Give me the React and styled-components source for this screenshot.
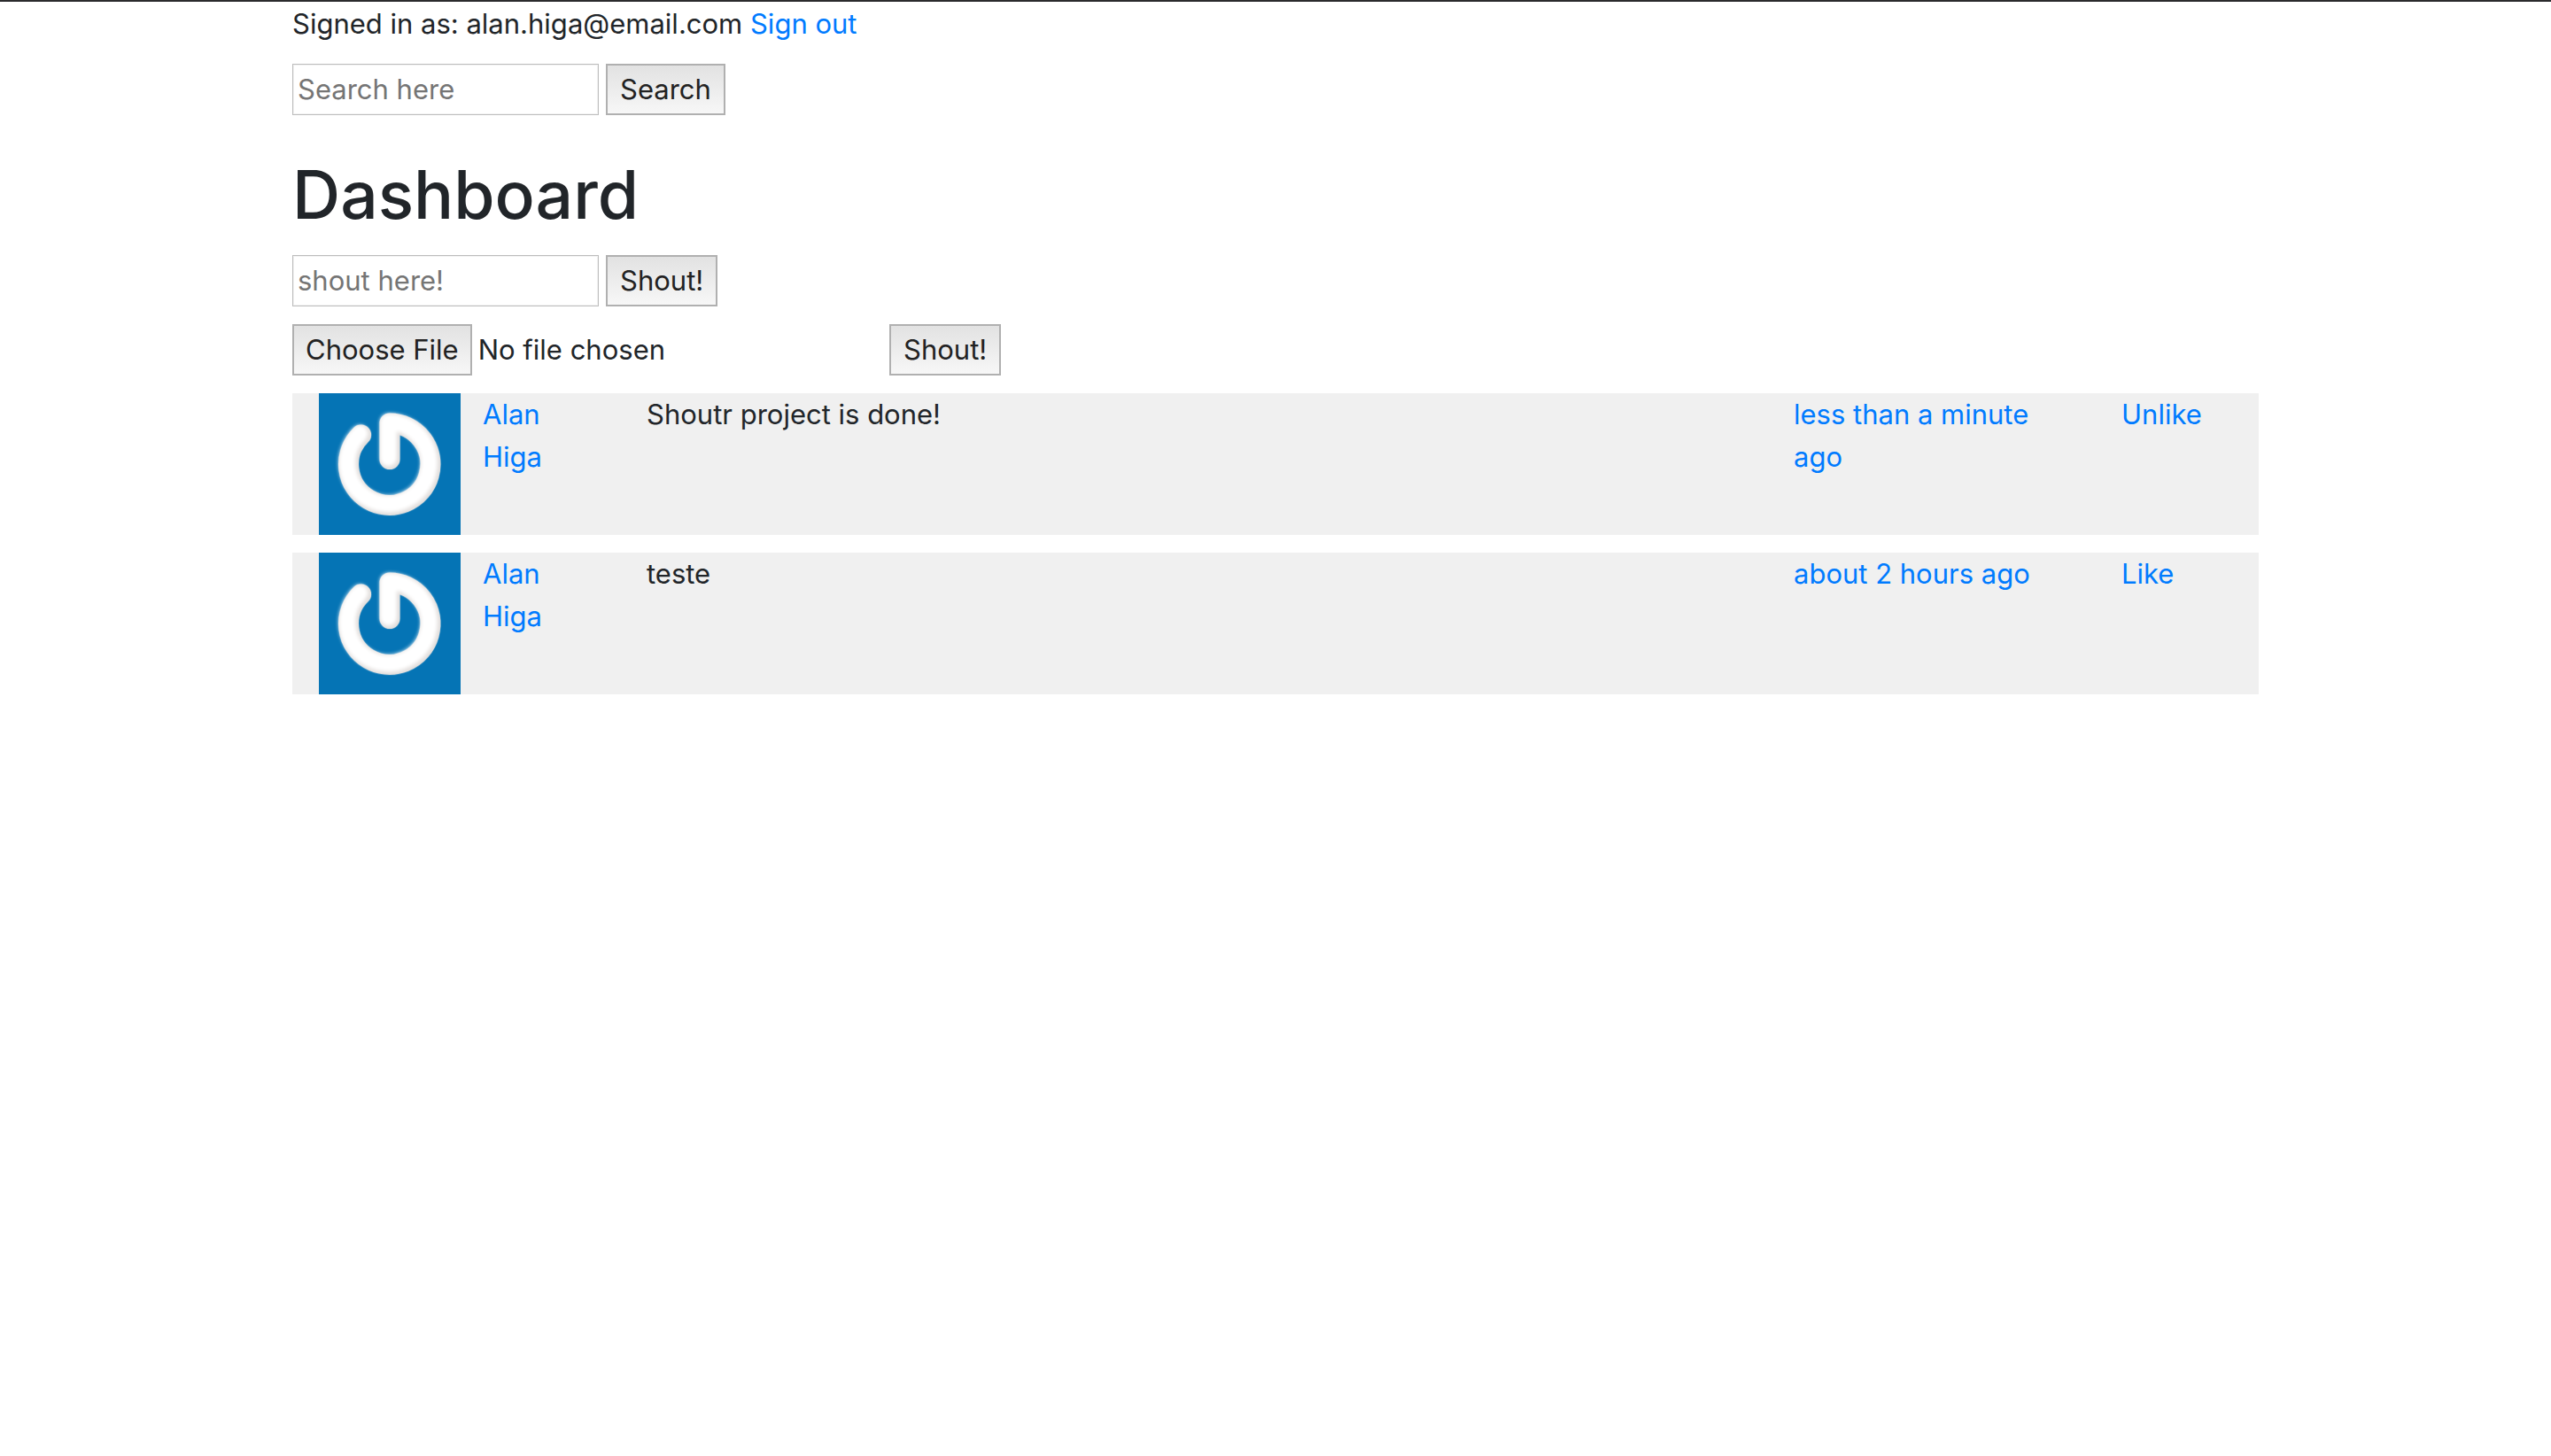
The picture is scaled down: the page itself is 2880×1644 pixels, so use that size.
import React from "react";
import styled, { createGlobalStyle } from "styled-components";

const GlobalStyle = createGlobalStyle`
  *, *::before, *::after { box-sizing: border-box; }
  body {
    margin: 0;
    background: #fff;
    color: #212529;
    font-family: Inter, "Liberation Sans", sans-serif;
    font-size: 31px;
    line-height: 48px;
  }
`;

const Page = styled.div`
  border-top: 2px solid #2b2b2d;
`;

const Container = styled.main`
  max-width: 2280px;
  margin: 0 auto;
  padding: 0 30px 20px;
  display: flex;
  flex-direction: column;
  gap: 20px;
`;

const Link = styled.a`
  color: #007bff;
  text-decoration: none;
  &:hover { text-decoration: underline; }
`;

const Header = styled.header`
  padding: 1px 0;
`;

const Title = styled.h1`
  margin: 20px 0 0;
  padding-top: 2px;
  font-size: 75px;
  font-weight: 500;
  line-height: 96px;
`;

const Form = styled.form`
  display: flex;
  align-items: center;
  gap: 8px;
`;

const TextInput = styled.input`
  width: 346px;
  height: 58px;
  padding: 0 5px 2px;
  border: 1px solid #bdbdbd;
  box-shadow: inset 0 0 0 1px #f2f2f2;
  background: #fff;
  color: inherit;
  font: inherit;
  &::placeholder { color: #757575; opacity: 1; }
`;

const Button = styled.button`
  height: 58px;
  padding: 0 14px;
  border: 2px solid #b0b0b0;
  border-radius: 0;
  background: linear-gradient(#e2e2e2, #f7f7f7);
  color: #222;
  font: inherit;
`;

const FileInput = styled.input`
  width: 666px;
  height: 58px;
  color: inherit;
  font: inherit;
  &::file-selector-button {
    height: 58px;
    margin: 0 7px 0 0;
    padding: 0 13px;
    border: 2px solid #b0b0b0;
    border-radius: 0;
    background: linear-gradient(#e2e2e2, #f7f7f7);
    color: #222;
    font: inherit;
  }
`;

const ShoutList = styled.div`
  display: flex;
  flex-direction: column;
  gap: 20px;
`;

const Shout = styled.article`
  display: grid;
  grid-template-columns: repeat(12, minmax(0, 1fr));
  background: #f0f0f0;
`;

const Cell = styled.div`
  grid-column: span ${(p) => p.$span};
  padding: 0 30px;
`;

const AvatarImage = styled.svg`
  display: block;
  width: 160px;
  height: 160px;
`;

const Highlight = styled.path`
  filter: blur(2px);
`;

const MARK = "M80 74.5V34A46.2 46.2 0 1 1 47.6 47";

function Avatar() {
  return (
    <AvatarImage viewBox="0 0 160 160" role="img" aria-label="Avatar">
      <rect width="160" height="160" fill="#0574b5" />
      <g fill="none" strokeLinecap="round" strokeLinejoin="round">
        <path d={MARK} stroke="#5ba3d0" strokeWidth="24.4" opacity="0.5" />
        <path d={MARK} stroke="#e2dedc" strokeWidth="23" />
        <Highlight d={MARK} stroke="#fff" strokeWidth="19" transform="translate(-1.5 -1.5)" />
      </g>
    </AvatarImage>
  );
}

const shouts = [
  { id: 1, author: "Alan Higa", body: "Shoutr project is done!", time: "less than a minute ago", action: "Unlike" },
  { id: 2, author: "Alan Higa", body: "teste", time: "about 2 hours ago", action: "Like" },
];

const stay = (e) => e.preventDefault();

export default function App() {
  return (
    <Page>
      <GlobalStyle />
      <Container>
        <Header>
          Signed in as: alan.higa@email.com <Link href="#sign-out">Sign out</Link>
        </Header>
        <Form onSubmit={stay}>
          <TextInput type="text" aria-label="Search" placeholder="Search here" />
          <Button type="submit">Search</Button>
        </Form>
        <Title>Dashboard</Title>
        <Form onSubmit={stay}>
          <TextInput type="text" aria-label="Shout" placeholder="shout here!" />
          <Button type="submit">Shout!</Button>
        </Form>
        <Form onSubmit={stay}>
          <FileInput type="file" aria-label="Photo" />
          <Button type="submit">Shout!</Button>
        </Form>
        <ShoutList>
          {shouts.map((s) => (
            <Shout key={s.id}>
              <Cell $span={1}><Avatar /></Cell>
              <Cell $span={1}><Link href="#alan">{s.author}</Link></Cell>
              <Cell $span={7}>{s.body}</Cell>
              <Cell $span={2}><Link href={`#shout-${s.id}`}>{s.time}</Link></Cell>
              <Cell $span={1}><Link href={`#like-${s.id}`}>{s.action}</Link></Cell>
            </Shout>
          ))}
        </ShoutList>
      </Container>
    </Page>
  );
}
